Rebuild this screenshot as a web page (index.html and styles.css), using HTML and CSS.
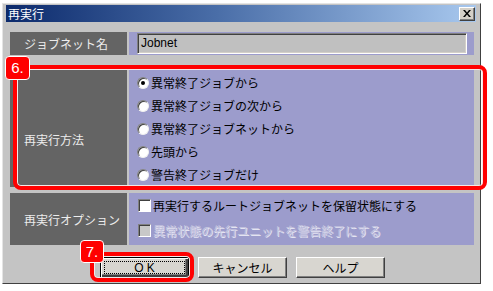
FILE: index.html
```html
<!DOCTYPE html>
<html lang="ja">
<head>
<meta charset="utf-8">
<title>再実行</title>
<link rel="stylesheet" href="styles.css">
</head>
<body>
<div class="window">
  <div class="titlebar">
    <span class="title">再実行</span>
    <span class="close"><svg width="8" height="7" viewBox="0 0 8 7"><path d="M0 0h2l2 2.5L6 0h2L5 3.5 8 7H6L4 4.5 2 7H0l3-3.5z" fill="#000"/></svg></span>
  </div>
  <div class="row row1">
    <div class="label">ジョブネット名</div>
    <div class="value">
      <div class="input">Jobnet</div>
    </div>
  </div>
  <div class="row row2">
    <div class="label label-low">再実行方法</div>
    <div class="value list">
      <div class="item"><span class="radio on"></span>異常終了ジョブから</div>
      <div class="item"><span class="radio"></span>異常終了ジョブの次から</div>
      <div class="item"><span class="radio"></span>異常終了ジョブネットから</div>
      <div class="item"><span class="radio"></span>先頭から</div>
      <div class="item"><span class="radio"></span>警告終了ジョブだけ</div>
    </div>
  </div>
  <div class="row row3">
    <div class="label">再実行オプション</div>
    <div class="value list">
      <div class="item tall"><span class="check"></span>再実行するルートジョブネットを保留状態にする</div>
      <div class="item tall disabled"><span class="check off"></span>異常状態の先行ユニットを警告終了にする</div>
    </div>
  </div>
  <div class="buttons">
    <div class="btn default"><span class="focus">OK</span></div>
    <div class="btn">キャンセル</div>
    <div class="btn">ヘルプ</div>
  </div>
</div>
<div class="hl hl6"></div>
<div class="badge badge6">6.</div>
<div class="hl hl7"></div>
<div class="badge badge7">7.</div>
</body>
</html>
```
FILE: styles.css
```css
html, body {
  margin: 0;
  padding: 0;
  background: #ffffff;
}
body {
  position: relative;
  width: 493px;
  height: 291px;
  overflow: hidden;
  font-family: "Noto Sans CJK JP", "Liberation Sans", sans-serif;
  font-size: 12px;
}
.window {
  margin: 3px 0 0 2px;
  width: 479px;
  height: 281px;
  box-sizing: border-box;
  border: 1px solid;
  border-color: #e4e4e4 #404040 #404040 #e4e4e4;
  padding: 1px 4px 0 3px;
  background: #c4c4c4;
  display: flex;
  flex-direction: column;
}
.titlebar {
  height: 17px;
  background: linear-gradient(to right, #0c2a6c, #4a6ea8 45%, #a8c8ee);
  display: flex;
  align-items: center;
  justify-content: space-between;
  padding: 0 1px 0 2px;
}
.title {
  color: #ffffff;
  font-size: 12px;
  line-height: 17px;
}
.close {
  width: 16px;
  height: 14px;
  box-sizing: border-box;
  background: #d4d0c8;
  border: 1px solid;
  border-color: #ffffff #404040 #404040 #ffffff;
  box-shadow: inset -1px -1px 0 #808080;
  display: flex;
  align-items: center;
  justify-content: center;
}
.row {
  display: flex;
  gap: 2px;
  margin-left: 4px;
  margin-right: 2px;
}
.row1 { margin-top: 10px; height: 23px; }
.row2 { margin-top: 15px; height: 117px; }
.row3 { margin-top: 6px; height: 52px; }
.label {
  width: 117px;
  flex: none;
  background: #646464;
  color: #ececec;
  display: flex;
  align-items: center;
  padding-left: 14px;
  box-sizing: border-box;
  font-size: 12px;
}
.label-low { padding-top: 22px; }
.value {
  flex: 1;
  background: #9c9ccc;
}
.row1 .value {
  padding: 1px 7px 1px 8px;
}
.input {
  height: 21px;
  box-sizing: border-box;
  border: 1px solid;
  border-color: #808080 #ffffff #ffffff #808080;
  box-shadow: inset 1px 1px 0 #404040, inset -1px -1px 0 #d4d0c8;
  background: #c0c0c0;
  padding-left: 3px;
  line-height: 19px;
  font-family: "Liberation Sans", sans-serif;
  font-size: 12px;
  color: #000;
}
.list {
  display: flex;
  flex-direction: column;
  padding-left: 8px;
  padding-top: 1px;
  box-sizing: border-box;
}
.row3 .list { padding-top: 0; }
.item {
  height: 23px;
  display: flex;
  align-items: center;
  color: #000;
  white-space: nowrap;
}
.item.tall { height: 25px; }
.radio {
  width: 12px;
  height: 12px;
  box-sizing: border-box;
  border-radius: 50%;
  border: 1px solid;
  border-color: #808080 #f0f0f0 #f0f0f0 #808080;
  box-shadow: inset 1px 1px 0 #404040;
  background: #ffffff;
  margin-right: 2px;
  flex: none;
  display: flex;
  align-items: center;
  justify-content: center;
}
.radio.on::after {
  content: "";
  width: 4px;
  height: 4px;
  border-radius: 50%;
  background: #000;
}
.check {
  width: 13px;
  height: 13px;
  box-sizing: border-box;
  border: 1px solid;
  border-color: #808080 #ffffff #ffffff #808080;
  box-shadow: inset 1px 1px 0 #404040;
  background: #ffffff;
  margin-left: 1px;
  margin-right: 2px;
  flex: none;
}
.check.off { background: #c8c8c8; }
.disabled {
  color: #c2c2de;
  text-shadow: 1px 1px 0 #e4e4f2;
}
.buttons {
  display: flex;
  gap: 9px;
  margin-top: 12px;
  margin-left: 94px;
}
.btn {
  width: 89px;
  height: 21px;
  box-sizing: border-box;
  background: #d8d6d0;
  border: 1px solid;
  border-color: #ffffff #404040 #404040 #ffffff;
  box-shadow: inset -1px -1px 0 #808080;
  display: flex;
  align-items: center;
  justify-content: center;
  color: #000;
  font-size: 12px;
}
.btn.default {
  border-color: #000;
  box-shadow: inset 1px 1px 0 #ffffff, inset -2px -2px 0 #404040, inset -3px -3px 0 #808080;
  padding: 3px;
}
.focus {
  flex: 1;
  align-self: stretch;
  border: 1px dotted #000;
  display: flex;
  align-items: center;
  justify-content: center;
  letter-spacing: 3px;
  padding-left: 3px;
  font-family: "Liberation Sans", sans-serif;
}
.hl {
  position: absolute;
  box-sizing: border-box;
  border: 4px solid #ff0000;
  border-radius: 8px;
  box-shadow: inset 0 0 0 1px #f4e8e8;
}
.hl6 { left: 13px; top: 65px; width: 474px; height: 125px; }
.hl7 { left: 90px; top: 252px; width: 104px; height: 30px; }
.badge {
  position: absolute;
  box-sizing: border-box;
  background: #ff0000;
  border: 1px solid #ffffff;
  border-radius: 4px;
  color: #ffffff;
  font-family: "Liberation Sans", sans-serif;
  font-size: 15px;
  line-height: 22px;
  text-align: center;
}
.badge6 { left: 5px; top: 56px; width: 25px; height: 24px; }
.badge7 { left: 80px; top: 240px; width: 24px; height: 23px; line-height: 21px; }
```
